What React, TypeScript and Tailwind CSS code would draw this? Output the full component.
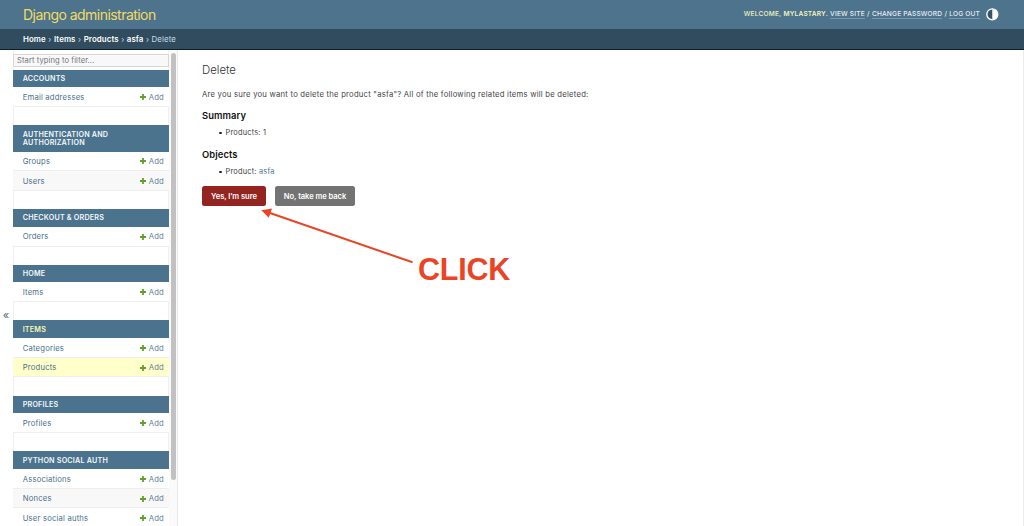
type Row = { name: string; tone?: string };
type Module = { title: string[]; rows: Row[]; current?: boolean };

const modules: Module[] = [
  { title: ['ACCOUNTS'], rows: [{ name: 'Email addresses' }] },
  {
    title: ['AUTHENTICATION AND', 'AUTHORIZATION'],
    rows: [{ name: 'Groups' }, { name: 'Users', tone: 'bg-[#f8f8f8]' }],
  },
  { title: ['CHECKOUT & ORDERS'], rows: [{ name: 'Orders' }] },
  { title: ['HOME'], rows: [{ name: 'Items' }] },
  {
    title: ['ITEMS'],
    current: true,
    rows: [{ name: 'Categories' }, { name: 'Products', tone: 'bg-[#ffffcc]' }],
  },
  { title: ['PROFILES'], rows: [{ name: 'Profiles' }] },
  {
    title: ['PYTHON SOCIAL AUTH'],
    rows: [
      { name: 'Associations' },
      { name: 'Nonces', tone: 'bg-[#f8f8f8]' },
      { name: 'User social auths' },
    ],
  },
];

function AddLink() {
  return (
    <a className="flex items-center gap-[2.5px] text-[#5f8198]">
      <svg className="mb-px h-[6px] w-[6px]" viewBox="0 0 6 6">
        <path d="M3 0V6M0 3H6" stroke="#5fa225" strokeWidth="1.8" />
      </svg>
      <span>Add</span>
    </a>
  );
}

function AppModule({ module }: { module: Module }) {
  return (
    <section className="mb-[18.15px]">
      <h2
        className={`bg-[#4b738d] px-[9.7px] pt-[5.4px] pb-[4px] text-[7.2px] leading-[8.4px] font-semibold tracking-[0.19px] ${
          module.current ? 'text-[#f8f6b4]' : 'text-[#f4f7f9]'
        }`}
      >
        {module.title.map((line) => (
          <span key={line} className="block">
            {line}
          </span>
        ))}
      </h2>
      {module.rows.map((row) => (
        <div
          key={row.name}
          className={`flex h-[19.7px] items-center justify-between border-b border-[#eeeeee] pt-[2px] pr-[5px] pl-[9.7px] text-[7.7px] tracking-[0.18px] text-[#4b6f89] ${
            row.tone ?? 'bg-white'
          }`}
        >
          <a>{row.name}</a>
          <AddLink />
        </div>
      ))}
    </section>
  );
}

function Sidebar() {
  return (
    <nav className="flex w-[178px] shrink-0 overflow-hidden border-r border-[#eaeaea]">
      <button className="flex w-[13px] shrink-0 items-center justify-center pt-[55px] pr-[1px] text-[11px] text-[#4b6f89]">
        «
      </button>
      <div className="w-[156px] shrink-0 pt-[4px] shadow-[inset_1px_0_#f0f0f0,inset_-1px_0_#f0f0f0]">
        <div className="mb-[2.5px] flex h-[13.2px] items-center border border-[#d6d6d6] bg-[#f8f8f8] pt-[1px] pl-[3px] text-[7.6px] tracking-[0.08px] text-[#757575]">
          Start typing to filter...
        </div>
        {modules.map((m) => (
          <AppModule key={m.title[0]} module={m} />
        ))}
      </div>
      <div className="flex w-[8px] shrink-0 justify-center bg-[#fafafa] pt-[3px]">
        <div className="h-[427px] w-[5px] rounded-full bg-[#c1c1c1]" />
      </div>
    </nav>
  );
}

function Header() {
  return (
    <header className="flex h-[28.5px] shrink-0 items-center justify-between bg-[#4d738d] pr-[25px] pl-[23px]">
      <h1 className="pt-[2px] text-[14px] leading-none tracking-[-0.54px] text-[#f2dc60]">
        Django administration
      </h1>
      <div className="flex items-center gap-[6px]">
        <div className="flex gap-[2.2px] text-[6.6px] leading-[8px] font-medium tracking-[0.18px] whitespace-nowrap text-[#f2f3bf]">
          <span>WELCOME,</span>
          <span className="font-semibold">MYLASTARY.</span>
          <a className="border-b border-[#7895a8] text-[#e8eef2]">VIEW SITE</a>
          <span>/</span>
          <a className="border-b border-[#7895a8] text-[#e8eef2]">CHANGE PASSWORD</a>
          <span>/</span>
          <a className="border-b border-[#7895a8] text-[#e8eef2]">LOG OUT</a>
        </div>
        <svg className="h-[13px] w-[13px]" viewBox="0 0 13 13">
          <circle cx="6.3" cy="6.3" r="5.5" fill="none" stroke="#fff" strokeWidth="1.3" />
          <path d="M6.3 2A4.3 4.3 0 0 0 6.3 10.6Z" fill="#355469" />
          <path d="M6.3 0.8A5.5 5.5 0 0 1 6.3 11.8Z" fill="#fff" />
        </svg>
      </div>
    </header>
  );
}

function Breadcrumbs() {
  const trail = ['Home', 'Items', 'Products', 'asfa'];
  return (
    <div className="flex h-[21.5px] shrink-0 items-center gap-[2.5px] border-b-[1.5px] border-[#0e1c35] bg-[#304c5e] pt-[3px] pl-[23px] text-[7.9px] tracking-[0.09px] text-[#c4dce8]">
      {trail.map((item) => (
        <span key={item} className="flex gap-[2.5px]">
          <a className="font-semibold text-white">{item}</a>
          <span>›</span>
        </span>
      ))}
      <span>Delete</span>
    </div>
  );
}

function Content() {
  return (
    <main className="relative flex-1 pt-[12.5px] pl-[24px] text-[#444444]">
      <h1 className="text-[11.4px] leading-[15px] font-light text-[#333333]">Delete</h1>
      <p className="mt-[11px] text-[7.7px] leading-[11px] tracking-[0.225px] whitespace-nowrap">
        Are you sure you want to delete the product "asfa"? All of the following related items will
        be deleted:
      </p>
      <h2 className="mt-[9px] text-[9.4px] leading-[13px] font-semibold tracking-[0.1px] text-[#111]">
        Summary
      </h2>
      <div className="mt-[6px] flex h-[11px] items-center gap-[4px] pl-[17px] text-[7.4px] tracking-[0.2px]">
        <span className="size-[2.6px] rounded-full bg-[#222]" />
        <span>Products: 1</span>
      </div>
      <h2 className="mt-[9px] text-[9.4px] leading-[13px] font-semibold tracking-[0.1px] text-[#111]">
        Objects
      </h2>
      <div className="mt-[6px] flex h-[11px] items-center gap-[4px] pl-[17px] text-[7.4px] tracking-[0.2px]">
        <span className="size-[2.6px] rounded-full bg-[#222]" />
        <span>
          Product: <a className="text-[#4b7390]">asfa</a>
        </span>
      </div>
      <div className="mt-[8.4px] flex gap-[9px] text-[7.6px] font-semibold tracking-[-0.06px] text-white">
        <button className="h-[20.6px] w-[64px] rounded-[2.5px] bg-[#94241f] pt-px">
          Yes, I’m sure
        </button>
        <button className="h-[20.6px] w-[80px] rounded-[2.5px] bg-[#737373] pt-px">
          No, take me back
        </button>
      </div>
      <svg
        className="absolute top-[154px] left-[79px] h-[62px] w-[160px]"
        viewBox="257 204 160 62"
      >
        <path d="M270 213L412.5 262.3" stroke="#ea4427" strokeWidth="2" />
        <path d="M261.3 210.2L272 208.5L268.8 217.8Z" fill="#ea4427" />
      </svg>
      <span className="absolute top-[202px] left-[240px] font-['Liberation_Sans',Arial,sans-serif] text-[30.5px] leading-[34px] font-bold tracking-[-0.2px] text-[#ea4427]">
        CLICK
      </span>
    </main>
  );
}

export default function App() {
  return (
    <div className="flex h-[526px] w-[1024px] flex-col overflow-hidden bg-white font-['Inter',sans-serif]">
      <Header />
      <Breadcrumbs />
      <div className="flex min-h-0 flex-1">
        <Sidebar />
        <Content />
        <div className="w-px bg-[#ededed]" />
      </div>
    </div>
  );
}
